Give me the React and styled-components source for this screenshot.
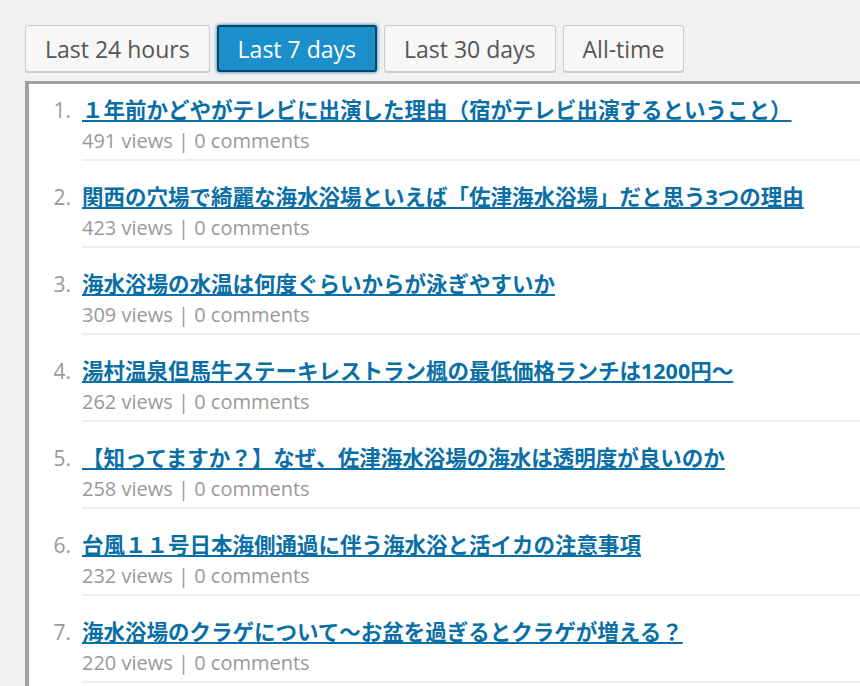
import styled, { createGlobalStyle } from 'styled-components';

const GlobalStyle = createGlobalStyle`
  html, body {
    margin: 0;
    background: #f1f1f1;
    overflow: hidden;
  }
  body {
    font-family: "Open Sans", "Noto Sans CJK JP", sans-serif;
  }
`;

const Page = styled.div`
  padding: 25px 0 0 25px;
`;

const Tabs = styled.div`
  display: flex;
  gap: 7px;
`;

const Tab = styled.button`
  height: 47px;
  padding: 0 19px;
  font-family: "Open Sans", sans-serif;
  font-size: 23px;
  color: ${(p) => (p.$active ? '#fff' : '#555')};
  background: ${(p) => (p.$active ? '#1a8fcb' : '#f7f7f7')};
  border: ${(p) => (p.$active ? '2px solid #0b4566' : '1px solid #ccc')};
  border-radius: 3px;
  box-shadow: ${(p) =>
    p.$active ? '0 0 3px 1px rgba(30, 140, 190, 0.7)' : '0 1px 0 #ccc'};
  cursor: pointer;
`;

const Panel = styled.div`
  margin-top: 9px;
  background: #fff;
  border-top: 3px solid #a0a0a0;
  border-left: 4px solid #a0a0a0;
  padding-top: 11px;
  min-height: 620px;
`;

const List = styled.ol`
  list-style: none;
  margin: 0;
  padding: 0;
`;

const Item = styled.li`
  display: flex;
  align-items: baseline;
  margin-bottom: 21px;
`;

const Num = styled.span`
  width: 42px;
  padding-right: 11px;
  text-align: right;
  font-size: 21px;
  line-height: 30px;
  color: #999;
`;

const Body = styled.div`
  flex: 1;
  padding-bottom: 3px;
  border-bottom: 2px solid #eee;
`;

const Title = styled.a`
  display: inline-block;
  font-family: "Open Sans", "Noto Sans CJK JP", sans-serif;
  font-size: 21.5px;
  font-weight: 700;
  line-height: 30px;
  color: #0a6fa6;
  text-decoration: underline;
  text-decoration-thickness: 2px;
  text-underline-offset: 2px;
  white-space: nowrap;
`;

const Meta = styled.div`
  font-size: 20px;
  line-height: 31px;
  color: #999;
`;

const tabs = ['Last 24 hours', 'Last 7 days', 'Last 30 days', 'All-time'];

const posts = [
  { title: '１年前かどやがテレビに出演した理由（宿がテレビ出演するということ）', views: 491 },
  { title: '関西の穴場で綺麗な海水浴場といえば「佐津海水浴場」だと思う3つの理由', views: 423 },
  { title: '海水浴場の水温は何度ぐらいからが泳ぎやすいか', views: 309 },
  { title: '湯村温泉但馬牛ステーキレストラン楓の最低価格ランチは1200円〜', views: 262 },
  { title: '【知ってますか？】なぜ、佐津海水浴場の海水は透明度が良いのか', views: 258 },
  { title: '台風１１号日本海側通過に伴う海水浴と活イカの注意事項', views: 232 },
  { title: '海水浴場のクラゲについて〜お盆を過ぎるとクラゲが増える？', views: 220 },
];

export default function App() {
  return (
    <Page>
      <GlobalStyle />
      <Tabs>
        {tabs.map((t) => (
          <Tab key={t} $active={t === 'Last 7 days'}>
            {t}
          </Tab>
        ))}
      </Tabs>
      <Panel>
        <List>
          {posts.map((p, i) => (
            <Item key={i}>
              <Num>{i + 1}.</Num>
              <Body>
                <Title href="#">{p.title}</Title>
                <Meta>{p.views} views | 0 comments</Meta>
              </Body>
            </Item>
          ))}
        </List>
      </Panel>
    </Page>
  );
}
